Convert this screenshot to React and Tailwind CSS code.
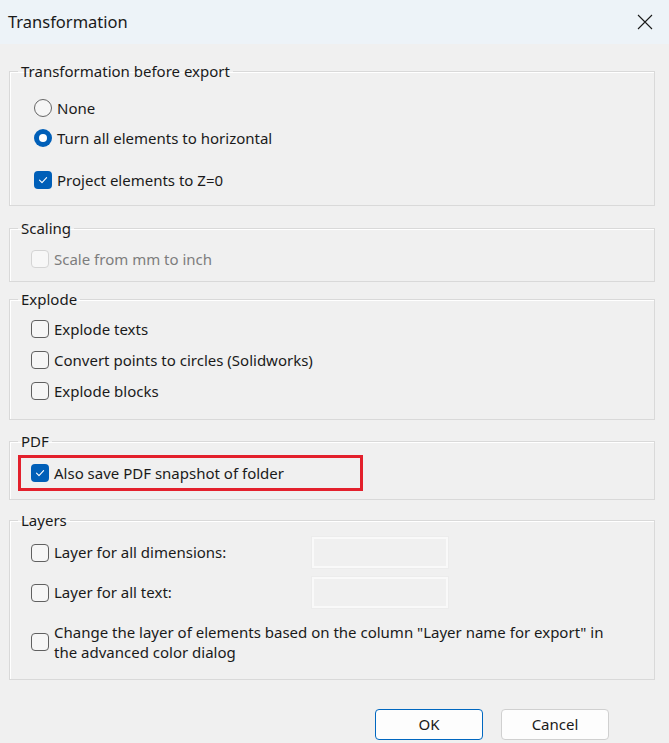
import React from "react";

const Check = ({ checked, disabled }) => {
  if (checked) {
    return (
      <span className="flex h-[18px] w-[18px] shrink-0 items-center justify-center rounded-[4px] bg-[#005fb8]">
        <svg width="12" height="12" viewBox="0 0 12 12" fill="none">
          <path d="M2.5 6.2 L5 8.6 L9.6 3.6" stroke="#ffffff" strokeWidth="1.1" strokeLinecap="round" strokeLinejoin="round" />
        </svg>
      </span>
    );
  }
  return (
    <span
      className={
        disabled
          ? "h-[18px] w-[18px] shrink-0 rounded-[4px] border border-[#d4d4d4] bg-[#f7f7f7]"
          : "h-[18px] w-[18px] shrink-0 rounded-[4px] border border-[#606060] bg-[#f6f6f6]"
      }
    />
  );
};

const Radio = ({ checked }) => {
  if (checked) {
    return (
      <span className="flex h-[18px] w-[18px] shrink-0 items-center justify-center rounded-full bg-[#005fb8]">
        <span className="h-[8px] w-[8px] rounded-full bg-white" />
      </span>
    );
  }
  return <span className="h-[18px] w-[18px] shrink-0 rounded-full border border-[#666666] bg-[#f6f6f6]" />;
};

// group box, legend sits on the top border; padding goes on the inner div so the legend stays put
const Group = ({ title, className, inner, children }) => (
  <fieldset className={"border border-[#d9d9d9] shadow-[inset_1px_1px_0_#ffffff] " + className}>
    <legend className="ml-[8px] h-[20px] px-[3px] leading-[20px]">{title}</legend>
    <div className={inner}>{children}</div>
  </fieldset>
);

const Field = () => (
  <div className="h-[31px] w-[136px] border-2 border-[#f9f9f9] bg-[#f0f0f0] shadow-[0_0_0_1px_#ececec]" />
);

export default function App() {
  return (
    <div className="h-[743px] w-full overflow-hidden bg-[#f0f0f0] font-['Noto_Sans',sans-serif] text-[15px] text-[#1a1a1a]">
      {/* Title bar */}
      <div className="flex h-[44px] items-center justify-between bg-[#edf3f8] pl-[8px] pr-[16px]">
        <span className="text-[16.5px] text-[#1a1a1a]">Transformation</span>
        <svg width="16" height="16" viewBox="0 0 16 16" fill="none">
          <path d="M1 1 L15 15 M15 1 L1 15" stroke="#1a1a1a" strokeWidth="1.1" />
        </svg>
      </div>

      <div className="pl-[9px] pr-[14px] pt-[17px]">
        {/* Transformation before export */}
        <Group title="Transformation before export" className="pb-[13px]" inner="pl-[24px]">
          <div className="mt-[15px] flex h-[24px] items-center gap-[5px]">
            <Radio />
            <span>None</span>
          </div>
          <div className="mt-[6px] flex h-[24px] items-center gap-[5px]">
            <Radio checked />
            <span>Turn all elements to horizontal</span>
          </div>
          <div className="mt-[18px] flex h-[24px] items-center gap-[5px]">
            <Check checked />
            <span>Project elements to Z=0</span>
          </div>
        </Group>

        {/* Scaling */}
        <Group title="Scaling" className="mt-[12px] pb-[10px]" inner="pl-[21px]">
          <div className="mt-[9px] flex h-[24px] items-center gap-[5px]">
            <Check disabled />
            <span className="text-[#7d7d7d]">Scale from mm to inch</span>
          </div>
        </Group>

        {/* Explode */}
        <Group title="Explode" className="mt-[7px] pb-[16px]" inner="pl-[21px]">
          <div className="mt-[8px] flex flex-col gap-[7px]">
            <div className="flex h-[24px] items-center gap-[5px]">
              <Check />
              <span>Explode texts</span>
            </div>
            <div className="flex h-[24px] items-center gap-[5px]">
              <Check />
              <span>Convert points to circles (Solidworks)</span>
            </div>
            <div className="flex h-[24px] items-center gap-[5px]">
              <Check />
              <span>Explode blocks</span>
            </div>
          </div>
        </Group>

        {/* PDF */}
        <Group title="PDF" className="mt-[11px] pb-[8px]" inner="">
          <div className="ml-[8px] mt-[4px] flex h-[36px] w-[345px] items-center gap-[5px] border-[3px] border-[#e3202c] pl-[10px]">
            <Check checked />
            <span>Also save PDF snapshot of folder</span>
          </div>
        </Group>

        {/* Layers */}
        <Group title="Layers" className="mt-[10px] pb-[17px]" inner="pl-[21px]">
          <div className="mt-[7px] flex h-[31px] items-center">
            <Check />
            <span className="ml-[5px] w-[258px]">Layer for all dimensions:</span>
            <Field />
          </div>
          <div className="mt-[9px] flex h-[31px] items-center">
            <Check />
            <span className="ml-[5px] w-[258px]">Layer for all text:</span>
            <Field />
          </div>
          <div className="mt-[14px] flex items-center gap-[5px]">
            <Check />
            <span className="leading-[20px]">
              Change the layer of elements based on the column "Layer name for export" in
              <br />
              the advanced color dialog
            </span>
          </div>
        </Group>

        {/* Buttons */}
        <div className="mt-[29px] flex justify-end gap-[18px] pr-[46px]">
          <button className="h-[31px] w-[108px] rounded-[4px] border border-[#0067c0] bg-[#fdfdfd] text-[15px] text-[#1a1a1a]">
            OK
          </button>
          <button className="h-[31px] w-[108px] rounded-[4px] border border-[#d0d0d0] bg-[#fdfdfd] text-[15px] text-[#1a1a1a]">
            Cancel
          </button>
        </div>
      </div>
    </div>
  );
}
